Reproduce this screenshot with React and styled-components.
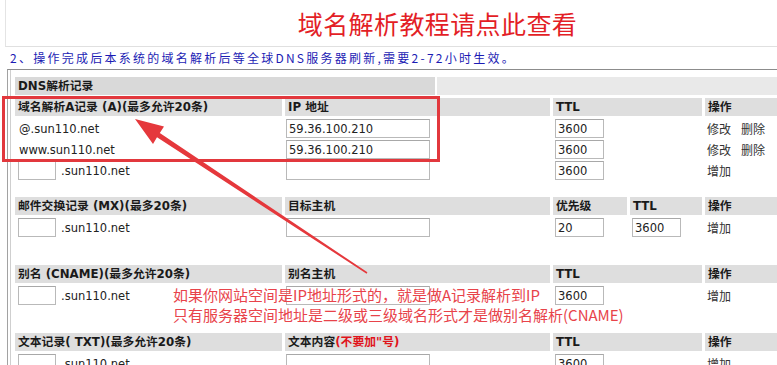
import React from "react";
import styled, { createGlobalStyle } from "styled-components";

const Global = createGlobalStyle`
  html, body { margin: 0; padding: 0; background: #fff; overflow: hidden; }
  body { font-family: "DejaVu Sans", "Noto Sans CJK SC", sans-serif; color: #222; }
`;

const Page = styled.div`
  position: relative;
  width: 869px;
  height: 365px;
`;

const TitleBar = styled.div`
  margin-left: 5px;
  height: 46px;
  border-left: 1px solid #e4e4e4;
  border-bottom: 1px solid #e0e0e0;
  display: flex;
  align-items: center;
  justify-content: center;
`;

const Title = styled.h1`
  margin: 0;
  font-family: "Noto Sans CJK SC", sans-serif;
  font-weight: 400;
  font-size: 25px;
  letter-spacing: 0.4px;
  color: #e31e26;
`;

const Notice = styled.div`
  height: 22px;
  line-height: 21px;
  padding-left: 10px;
  font-family: "Noto Sans CJK SC", sans-serif;
  font-size: 12px;
  letter-spacing: 2.25px;
  color: #1c1cb4;
  white-space: nowrap;
`;

const Panel = styled.div`
  margin-left: 7px;
  border-top: 1px solid #8c8c8c;
  border-left: 1px solid #a2a2a2;
  box-shadow: inset 2px 0 0 #fff, inset 3px 0 0 #cfcfcf;
  padding: 7px 0 0 7px;
  height: 300px;
`;

const Row = styled.div`
  display: grid;
  grid-template-columns: ${(p) => p.$cols};
  column-gap: ${(p) => p.$gap || "3px"};
  height: 18px;
  margin-top: ${(p) => p.$top || "3px"};
`;

const HeadCell = styled.div`
  background: ${(p) => p.$bg || "#dedede"};
  font-family: "DejaVu Sans", "Noto Sans CJK SC", sans-serif;
  font-weight: 700;
  font-size: 11.8px;
  line-height: 18px;
  padding-left: ${(p) => p.$pad || "3px"};
  white-space: nowrap;
  overflow: hidden;
  color: #1a1a1a;
`;

const Warn = styled.span`
  color: #e0141b;
`;

const Cell = styled.div`
  display: flex;
  align-items: center;
  gap: 5px;
  padding-left: ${(p) => p.$pad || "2px"};
  font-size: 11.5px;
  white-space: nowrap;
  color: #222;
`;

const Field = styled.input`
  box-sizing: border-box;
  width: ${(p) => p.$w};
  height: 19px;
  margin: 0;
  padding: 0 2px;
  border: 1px solid #b9b9b9;
  border-top-color: #a8a8a8;
  background: #fff;
  font-family: "DejaVu Sans", sans-serif;
  font-size: 11.5px;
  color: #222;
  outline: none;
`;

const Action = styled.span`
  font-family: "Noto Sans CJK SC", sans-serif;
  font-size: 12px;
  color: #333;
  margin-right: 5px;
`;

const Highlight = styled.div`
  position: absolute;
  left: 2px;
  top: 96px;
  width: 432px;
  height: 60px;
  border: 3px solid #e2383d;
  pointer-events: none;
`;

const Note = styled.div`
  position: absolute;
  left: 173px;
  top: 285px;
  font-family: "Noto Sans CJK SC", sans-serif;
  font-size: 15px;
  line-height: 20px;
  color: #e8434a;
  white-space: nowrap;
  pointer-events: none;
`;

const Arrow = styled.svg`
  position: absolute;
  left: 0;
  top: 0;
  pointer-events: none;
`;

const COLS4 = "267px 265px 149px 150px";
const COLS5 = "267px 265px 74px 72px 150px";

const Ops = ({ edit }) =>
  edit ? (
    <Cell>
      <Action>修改</Action>
      <Action>删除</Action>
    </Cell>
  ) : (
    <Cell>
      <Action>增加</Action>
    </Cell>
  );

const Sub = () => (
  <Cell $pad="3px">
    <Field $w="38px" readOnly value="" />
    <span>.sun110.net</span>
  </Cell>
);

export default function App() {
  return (
    <>
      <Global />
      <Page>
        <TitleBar>
          <Title>域名解析教程请点此查看</Title>
        </TitleBar>
        <Notice>2、操作完成后本系统的域名解析后等全球DNS服务器刷新,需要2-72小时生效。</Notice>
        <Panel>
          <Row $cols="420px 1fr" $gap="2px" $top="0px">
            <HeadCell $bg="#d9d9d9">DNS解析记录</HeadCell>
            <HeadCell $bg="#e9e9e9" />
          </Row>

          <Row $cols={COLS4}>
            <HeadCell>域名解析A记录 (A)(最多允许20条)</HeadCell>
            <HeadCell>IP 地址</HeadCell>
            <HeadCell>TTL</HeadCell>
            <HeadCell>操作</HeadCell>
          </Row>
          <Row $cols={COLS4}>
            <Cell $pad="4px">@.sun110.net</Cell>
            <Cell $pad="1px"><Field $w="144px" readOnly value="59.36.100.210" /></Cell>
            <Cell><Field $w="49px" readOnly value="3600" /></Cell>
            <Ops edit />
          </Row>
          <Row $cols={COLS4}>
            <Cell $pad="4px">www.sun110.net</Cell>
            <Cell $pad="1px"><Field $w="144px" readOnly value="59.36.100.210" /></Cell>
            <Cell><Field $w="49px" readOnly value="3600" /></Cell>
            <Ops edit />
          </Row>
          <Row $cols={COLS4}>
            <Sub />
            <Cell $pad="1px"><Field $w="144px" readOnly value="" /></Cell>
            <Cell><Field $w="49px" readOnly value="3600" /></Cell>
            <Ops />
          </Row>

          <Row $cols={COLS5} $top="18px">
            <HeadCell>邮件交换记录 (MX)(最多20条)</HeadCell>
            <HeadCell>目标主机</HeadCell>
            <HeadCell>优先级</HeadCell>
            <HeadCell>TTL</HeadCell>
            <HeadCell>操作</HeadCell>
          </Row>
          <Row $cols={COLS5}>
            <Sub />
            <Cell $pad="1px"><Field $w="144px" readOnly value="" /></Cell>
            <Cell><Field $w="49px" readOnly value="20" /></Cell>
            <Cell><Field $w="49px" readOnly value="3600" /></Cell>
            <Ops />
          </Row>

          <Row $cols={COLS4} $top="29px">
            <HeadCell>别名 (CNAME)(最多允许20条)</HeadCell>
            <HeadCell>别名主机</HeadCell>
            <HeadCell>TTL</HeadCell>
            <HeadCell>操作</HeadCell>
          </Row>
          <Row $cols={COLS4}>
            <Sub />
            <Cell $pad="1px"><Field $w="144px" readOnly value="" /></Cell>
            <Cell><Field $w="49px" readOnly value="3600" /></Cell>
            <Ops />
          </Row>

          <Row $cols={COLS4} $top="29px">
            <HeadCell>文本记录( TXT)(最多允许20条)</HeadCell>
            <HeadCell>
              文本内容<Warn>(不要加"号)</Warn>
            </HeadCell>
            <HeadCell>TTL</HeadCell>
            <HeadCell>操作</HeadCell>
          </Row>
          <Row $cols={COLS4}>
            <Sub />
            <Cell $pad="1px"><Field $w="144px" readOnly value="" /></Cell>
            <Cell><Field $w="49px" readOnly value="3600" /></Cell>
            <Ops />
          </Row>
        </Panel>

        <Highlight />
        <Note>
          <div>如果你网站空间是IP地址形式的，就是做A记录解析到IP</div>
          <div>只有服务器空间地址是二级或三级域名形式才是做别名解析(CNAME)</div>
        </Note>
        <Arrow width="777" height="365" viewBox="0 0 777 365">
          <polygon
            fill="#e5383c"
            points="135,119 164,126.5 159.8,133 367.4,272.3 366.6,273.7 157,137.3 153,144"
          />
        </Arrow>
      </Page>
    </>
  );
}
